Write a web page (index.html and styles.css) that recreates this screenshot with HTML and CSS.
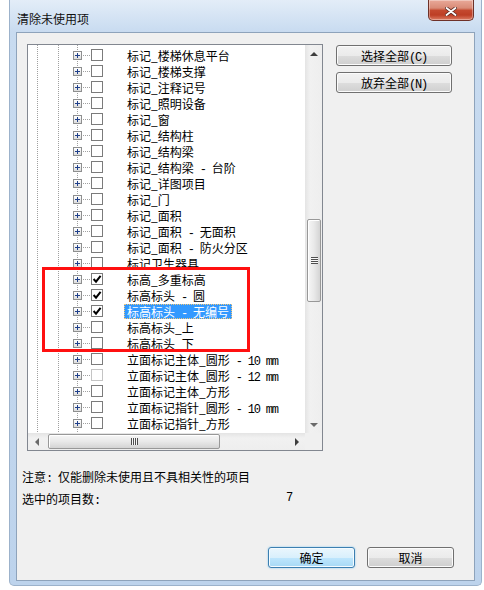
FILE: index.html
```html
<!DOCTYPE html>
<html lang="zh-CN">
<head>
  <meta charset="UTF-8" />
  <title>清除未使用项</title>
  <link rel="stylesheet" href="styles.css">
</head>
<body>
  <div class="window">

    <!-- Barre de titre -->
    <div class="titlebar">
      <span class="title">清除未使用项</span>
      <button class="close-btn" aria-label="关闭">
        <svg viewBox="0 0 12 9" width="12" height="9" aria-hidden="true">
          <path d="M1.5 1 L10.5 8 M10.5 1 L1.5 8" stroke="#5a2a22" stroke-width="3.4" stroke-linecap="round" fill="none"/>
          <path d="M1.5 1 L10.5 8 M10.5 1 L1.5 8" stroke="#fff" stroke-width="1.8" stroke-linecap="round" fill="none"/>
        </svg>
      </button>
    </div>

    <div class="panel">
      <div class="top-area">

        <!-- Liste arborescente -->
        <div class="listbox">
          <div class="tree">
            <div class="row"><span class="expander"></span><span class="check"></span><span class="label">标记_楼梯休息平台</span></div>
            <div class="row"><span class="expander"></span><span class="check"></span><span class="label">标记_楼梯支撑</span></div>
            <div class="row"><span class="expander"></span><span class="check"></span><span class="label">标记_注释记号</span></div>
            <div class="row"><span class="expander"></span><span class="check"></span><span class="label">标记_照明设备</span></div>
            <div class="row"><span class="expander"></span><span class="check"></span><span class="label">标记_窗</span></div>
            <div class="row"><span class="expander"></span><span class="check"></span><span class="label">标记_结构柱</span></div>
            <div class="row"><span class="expander"></span><span class="check"></span><span class="label">标记_结构梁</span></div>
            <div class="row"><span class="expander"></span><span class="check"></span><span class="label">标记_结构梁<span class="lat"> - </span>台阶</span></div>
            <div class="row"><span class="expander"></span><span class="check"></span><span class="label">标记_详图项目</span></div>
            <div class="row"><span class="expander"></span><span class="check"></span><span class="label">标记_门</span></div>
            <div class="row"><span class="expander"></span><span class="check"></span><span class="label">标记_面积</span></div>
            <div class="row"><span class="expander"></span><span class="check"></span><span class="label">标记_面积<span class="lat"> - </span>无面积</span></div>
            <div class="row"><span class="expander"></span><span class="check"></span><span class="label">标记_面积<span class="lat"> - </span>防火分区</span></div>
            <div class="row"><span class="expander"></span><span class="check"></span><span class="label">标记卫生器具</span></div>
            <div class="row"><span class="expander"></span><span class="check on"><svg viewBox="0 0 10 10" aria-hidden="true"><path d="M1.6 5 L4 7.6 L8.6 1.8" stroke="#000" stroke-width="2" fill="none"/></svg></span><span class="label">标高_多重标高</span></div>
            <div class="row"><span class="expander"></span><span class="check on"><svg viewBox="0 0 10 10" aria-hidden="true"><path d="M1.6 5 L4 7.6 L8.6 1.8" stroke="#000" stroke-width="2" fill="none"/></svg></span><span class="label">标高标头<span class="lat"> - </span>圆</span></div>
            <div class="row"><span class="expander"></span><span class="check on"><svg viewBox="0 0 10 10" aria-hidden="true"><path d="M1.6 5 L4 7.6 L8.6 1.8" stroke="#000" stroke-width="2" fill="none"/></svg></span><span class="label selected">标高标头<span class="lat"> - </span>无编号</span></div>
            <div class="row"><span class="expander"></span><span class="check"></span><span class="label">标高标头_上</span></div>
            <div class="row"><span class="expander"></span><span class="check"></span><span class="label">标高标头_下</span></div>
            <div class="row"><span class="expander"></span><span class="check"></span><span class="label">立面标记主体_圆形<span class="lat"> - 10 mm</span></span></div>
            <div class="row"><span class="expander"></span><span class="check dim"></span><span class="label">立面标记主体_圆形<span class="lat"> - 12 mm</span></span></div>
            <div class="row"><span class="expander"></span><span class="check"></span><span class="label">立面标记主体_方形</span></div>
            <div class="row"><span class="expander"></span><span class="check"></span><span class="label">立面标记指针_圆形<span class="lat"> - 10 mm</span></span></div>
            <div class="row"><span class="expander"></span><span class="check"></span><span class="label">立面标记指针_方形</span></div>
            <div class="row"><span class="expander"></span><span class="check"></span><span class="label">楼梯路径标记</span></div>

            <!-- Cadre rouge d'annotation -->
            <div class="mark-box"></div>
          </div>

          <div class="vscroll">
            <div class="arrow up"></div>
            <div class="vtrack"><div class="vthumb"><span class="vgrip"></span></div></div>
            <div class="arrow down"></div>
          </div>

          <div class="hscroll">
            <div class="arrow left"></div>
            <div class="htrack"><div class="hthumb"><span class="hgrip"></span></div></div>
            <div class="arrow right"></div>
          </div>

          <div class="corner"></div>
        </div>

        <!-- Boutons de droite -->
        <div class="side-buttons">
          <button class="btn wide">选择全部<span class="lat">(C)</span></button>
          <button class="btn wide">放弃全部<span class="lat">(N)</span></button>
        </div>
      </div>

      <div class="notes">
        <p>注意<span class="lat">: </span>仅能删除未使用且不具相关性的项目</p>
        <p class="count"><span class="count-label">选中的项目数<span class="lat">:</span></span><span class="lat">7</span></p>
      </div>

      <div class="actions">
        <button class="btn default">确定</button>
        <button class="btn">取消</button>
      </div>
    </div>
  </div>
</body>
</html>
```

FILE: styles.css
```css
/* Reset & base */
html, body {
  margin: 0;
  padding: 0;
  background: #fff;
}
body {
  font-family: "Noto Sans CJK SC", "Noto Sans", sans-serif;
  font-size: 12px;
  color: #000;
}

/* Latin demi-chasse (comme SimSun) */
.lat {
  font-family: "Liberation Mono", monospace;
  letter-spacing: -1.2px;
  white-space: pre;
}

/* Fenêtre (cadre verre Win7) */
.window {
  margin-left: 9px;
  width: 473px;
  height: 586px;
  box-sizing: border-box;
  padding: 0 6px 4px 6px;
  display: flex;
  flex-direction: column;
  background: linear-gradient(180deg, #e3edf8 0%, #c8dbf0 32px, #bdd3ec 100%);
  border: 1px solid #9cb2cb;
  border-top: none;
  border-radius: 0 0 5px 5px;
}

.titlebar {
  height: 32px;
  flex: none;
  display: flex;
  justify-content: space-between;
  align-items: flex-start;
}
.title {
  padding: 11px 0 0 1px;
  line-height: 16px;
  color: #111;
}
.close-btn {
  width: 46px;
  height: 21px;
  margin-right: 1px;
  padding: 0;
  border: 1px solid #6e3128;
  border-top: none;
  border-radius: 0 0 5px 5px;
  background: linear-gradient(180deg, #e9a999 0%, #d98b77 40%, #c4492f 52%, #bd3e25 75%, #dc7c63 100%);
  box-shadow: inset 0 0 0 1px rgba(255,255,255,0.35);
  display: flex;
  align-items: center;
  justify-content: center;
}
.close-btn svg {
  margin-top: 3px;
}

/* Panneau principal */
.panel {
  flex: 1;
  display: flex;
  flex-direction: column;
  background: #f0f0f0;
  border: 1px solid #8ea3bb;
}

.top-area {
  display: flex;
  align-items: flex-start;
  gap: 13px;
  padding: 11px 0 0 10px;
}

/* Liste */
.listbox {
  width: 296px;
  height: 407px;
  box-sizing: border-box;
  border: 1px solid #828790;
  background: #fff;
  display: grid;
  grid-template-columns: 1fr 17px;
  grid-template-rows: 1fr 17px;
}

.tree {
  position: relative;
  overflow: hidden;
  padding-top: 2px;
  background:
    linear-gradient(#a0a0a0 50%, transparent 50%) 9px 0 / 1px 2px repeat-y,
    linear-gradient(#a0a0a0 50%, transparent 50%) 30px 0 / 1px 2px repeat-y,
    linear-gradient(#a0a0a0 50%, transparent 50%) 49px 0 / 1px 2px repeat-y;
}

.row {
  height: 16px;
  display: flex;
  align-items: center;
  padding-left: 45px;
  white-space: nowrap;
  background: repeating-linear-gradient(90deg, #a0a0a0 0 1px, transparent 1px 2px) 55px 8px / 7px 1px no-repeat;
}

.expander {
  position: relative;
  flex: none;
  width: 9px;
  height: 9px;
  box-sizing: border-box;
  border: 1px solid #8e8f8f;
  background: linear-gradient(180deg, #fff, #dcdcdc);
  margin-right: 9px;
}
.expander::before,
.expander::after {
  content: "";
  position: absolute;
  background: #1f3f8a;
}
.expander::before {
  left: 1px; top: 3px;
  width: 5px; height: 1px;
}
.expander::after {
  left: 3px; top: 1px;
  width: 1px; height: 5px;
}

.check {
  flex: none;
  width: 12px;
  height: 12px;
  box-sizing: border-box;
  border: 1px solid #7b7b7b;
  background: #fff;
  margin-right: 21px;
  display: flex;
}
.check.dim {
  border-color: #c4c4c4;
}
.check svg {
  width: 10px;
  height: 10px;
}

.label {
  padding: 0 3px;
  height: 15px;
  line-height: 15px;
}
.label .lat {
  line-height: 0;
}
.label.selected {
  background: #3399ff;
  color: #fff;
  outline: 1px dotted #f2c77a;
  outline-offset: -1px;
}

.mark-box {
  position: absolute;
  left: 14px;
  top: 222px;
  width: 208px;
  height: 85px;
  box-sizing: border-box;
  border: 3px solid #ff1010;
}

/* Barres de défilement */
.vscroll {
  display: flex;
  flex-direction: column;
  background: linear-gradient(90deg, #e4e4e4, #f1f1f1 30%, #eeeeee);
}
.hscroll {
  display: flex;
  background: linear-gradient(180deg, #e4e4e4, #f1f1f1 30%, #eeeeee);
}
.corner {
  background: #f0f0f0;
}

.arrow {
  flex: none;
  width: 17px;
  height: 17px;
  display: flex;
  align-items: center;
  justify-content: center;
}
.arrow::before {
  content: "";
  width: 0;
  height: 0;
}
.arrow.up::before {
  border-left: 4px solid transparent;
  border-right: 4px solid transparent;
  border-bottom: 4px solid #3e3e3e;
}
.arrow.down::before {
  border-left: 4px solid transparent;
  border-right: 4px solid transparent;
  border-top: 4px solid #6a6a6a;
}
.arrow.left::before {
  border-top: 4px solid transparent;
  border-bottom: 4px solid transparent;
  border-right: 4px solid #6a6a6a;
}
.arrow.right::before {
  border-top: 4px solid transparent;
  border-bottom: 4px solid transparent;
  border-left: 4px solid #3e3e3e;
}

.vtrack {
  flex: 1;
  padding-top: 157px;
}
.vthumb {
  height: 83px;
  margin: 0 1px 0 2px;
  box-sizing: border-box;
  border: 1px solid #989898;
  border-radius: 2px;
  background: linear-gradient(90deg, #f6f6f6, #e9e9e9 50%, #d4d4d4);
  box-shadow: inset 1px 1px 0 #fff;
  display: flex;
  align-items: center;
  justify-content: center;
}
.vgrip {
  width: 7px;
  height: 7px;
  background: repeating-linear-gradient(180deg, #4f4f4f 0 1px, #f8f8f8 1px 2px);
}

.htrack {
  flex: 1;
  padding: 1px 0 0 3px;
}
.hthumb {
  width: 172px;
  height: 15px;
  box-sizing: border-box;
  border: 1px solid #989898;
  border-radius: 2px;
  background: linear-gradient(180deg, #f6f6f6, #e9e9e9 50%, #d4d4d4);
  box-shadow: inset 1px 1px 0 #fff;
  display: flex;
  align-items: center;
  justify-content: center;
}
.hgrip {
  width: 7px;
  height: 7px;
  background: repeating-linear-gradient(90deg, #4f4f4f 0 1px, #f8f8f8 1px 2px);
}

/* Boutons */
.side-buttons {
  display: flex;
  flex-direction: column;
  gap: 6px;
  margin-top: 1px;
}

.btn {
  width: 87px;
  height: 21px;
  padding: 0;
  font-family: inherit;
  font-size: 12px;
  color: #000;
  border: 1px solid #707070;
  border-radius: 3px;
  background: linear-gradient(180deg, #f2f2f2 0%, #ebebeb 50%, #dddddd 51%, #cfcfcf 100%);
  box-shadow: inset 0 0 0 1px #fbfbfb;
}
.btn.wide {
  width: 116px;
}
.btn.default {
  border-color: #3c7fb1;
  background: linear-gradient(180deg, #eaf6fd 0%, #d9f0fc 50%, #bee6fd 51%, #a7d9f5 100%);
  box-shadow: inset 0 0 0 1px #f4fbff, 0 0 2px #7ec4ef;
}

/* Notes du bas */
.notes {
  padding-left: 5px;
  margin-top: 16px;
  line-height: 19px;
}
.notes p {
  margin: 0;
}
.count {
  display: flex;
}
.count-label {
  width: 264px;
}

.actions {
  margin-top: auto;
  display: flex;
  justify-content: flex-end;
  gap: 12px;
  padding: 0 20px 12px 0;
}
```
